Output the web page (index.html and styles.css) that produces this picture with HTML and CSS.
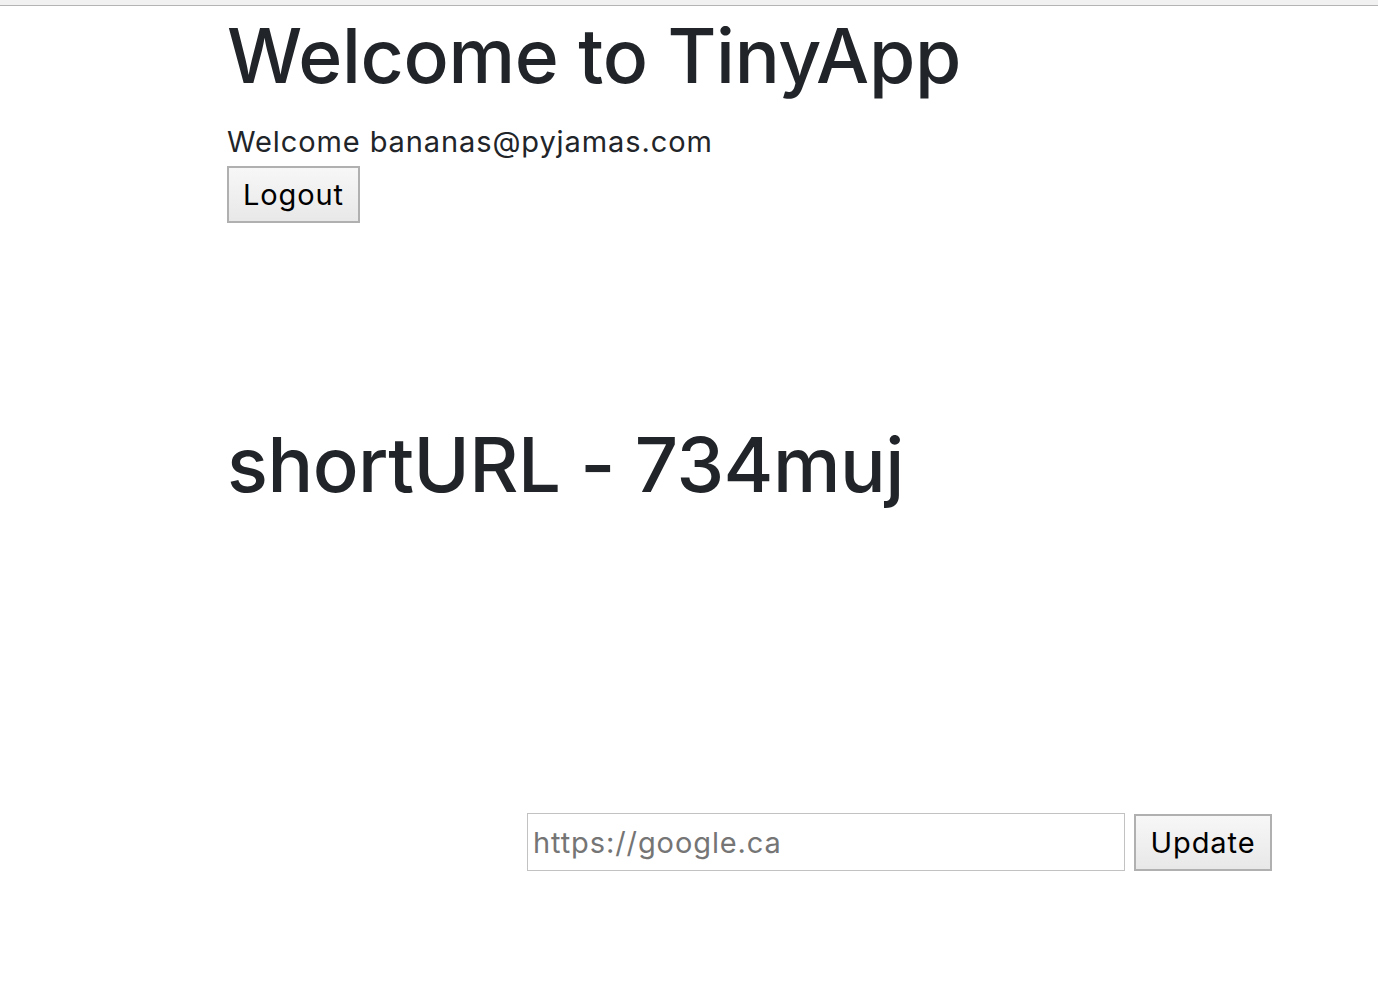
FILE: index.html
```html
<!DOCTYPE html>
<html>
<head>
<meta charset="utf-8">
<title>TinyApp</title>
<link rel="stylesheet" href="styles.css">
</head>
<body>
<div class="chrome"></div>
<main class="container">
  <header class="header">
    <h1 class="title">Welcome to TinyApp</h1>
    <p class="user">Welcome bananas@pyjamas.com</p>
    <button class="btn logout" type="button">Logout</button>
  </header>
  <h2 class="short">shortURL - 734muj</h2>
  <form class="update-form">
    <input class="url-input" type="text" placeholder="https://google.ca">
    <button class="btn update" type="button">Update</button>
  </form>
</main>
</body>
</html>
```
FILE: styles.css
```css
html, body {
  margin: 0;
  padding: 0;
  background: #ffffff;
}
body {
  font-family: Inter, "Liberation Sans", sans-serif;
  color: #212529;
}
.chrome {
  height: 5px;
  background: #f1f1f1;
  border-bottom: 1px solid #b4b4b4;
}
.container {
  padding-left: 227px;
}
.header {
  display: flex;
  flex-direction: column;
  align-items: flex-start;
}
.title {
  margin: 9px 0 0 0;
  font-size: 75px;
  font-weight: 500;
  line-height: 1.1;
  letter-spacing: -0.3px;
}
.user {
  margin: 27px 0 0 0;
  font-size: 29px;
  letter-spacing: 0.9px;
  line-height: 1.2;
}
.btn {
  font-family: Inter, "Liberation Sans", sans-serif;
  color: #000;
  background: linear-gradient(#f7f7f7, #e8e8e8);
  border: 2px solid #b0b0b0;
  border-radius: 0;
  padding: 0 10px;
  font-size: 29px;
  letter-spacing: 0.9px;
  margin: 0;
}
.logout {
  height: 57px;
  width: 133px;
  margin-top: 7px;
}
.short {
  margin: 196px 0 0 0;
  font-size: 76px;
  font-weight: 500;
  line-height: 1.2;
  letter-spacing: -0.5px;
}
.update-form {
  display: flex;
  align-items: center;
  gap: 9px;
  margin-top: 303px;
  padding-left: 300px;
}
.url-input {
  box-sizing: border-box;
  width: 598px;
  height: 58px;
  border: 1px solid #c2c2c2;
  padding: 0 5px;
  font-family: Inter, "Liberation Sans", sans-serif;
  font-size: 29px;
  letter-spacing: 0.9px;
  color: #333;
  outline: none;
}
.url-input::placeholder {
  color: #757575;
}
.update {
  width: 138px;
  height: 57px;
}
```
